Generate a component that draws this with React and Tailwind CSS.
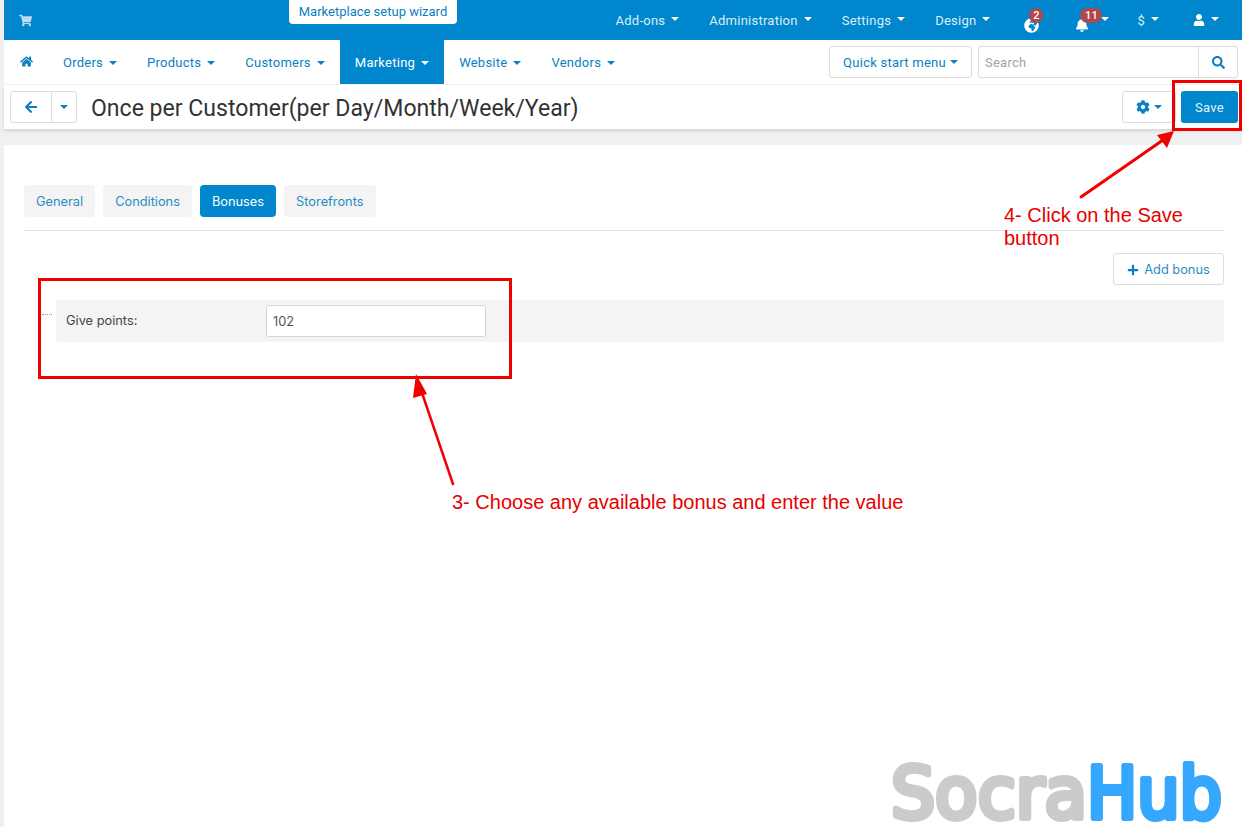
import React from 'react';
import {
  FaShoppingCart,
  FaHome,
  FaArrowLeft,
  FaCog,
  FaSearch,
  FaPlus,
  FaUser,
  FaBell,
  FaGlobeAfrica,
} from 'react-icons/fa';

const TOP_MENU = ['Add-ons', 'Administration', 'Settings', 'Design'];
const MAIN_MENU = ['Orders', 'Products', 'Customers', 'Marketing', 'Website', 'Vendors'];
const TABS = ['General', 'Conditions', 'Bonuses', 'Storefronts'];

function Caret({ className = '' }) {
  return (
    <span
      className={`inline-block w-0 h-0 border-x-[4px] border-x-transparent border-t-[4px] ${className}`}
    />
  );
}

function Badge({ children, className = '' }) {
  return (
    <span
      className={`absolute top-[8px] h-[15px] rounded-full bg-[#b0484c] text-white text-[11px] leading-[15px] text-center font-medium ${className}`}
    >
      {children}
    </span>
  );
}

function TopBar() {
  return (
    <div className="h-10 bg-[#0086cc] flex items-start text-[#d9eef9] text-[13px] tracking-[0.25px]">
      <FaShoppingCart className="mt-[14px] ml-[15px] text-[13px] text-[#b9def2]" />
      <div className="ml-[257px] w-[168px] h-6 bg-white rounded-b-[4px] text-[#0b7fc1] text-center leading-[24px] tracking-normal">
        Marketplace setup wizard
      </div>
      <div className="ml-auto flex items-center h-10 pr-[23px]">
        {TOP_MENU.map((item) => (
          <div key={item} className="flex items-center gap-[6px] px-[15px] pt-px">
            {item}
            <Caret className="border-t-white -mt-[3px]" />
          </div>
        ))}
        <div className="relative ml-[19px] w-[15px] h-10 flex items-center">
          <FaGlobeAfrica className="mt-[10px] text-[15px] text-white" />
          <Badge className="left-[5px] w-[14px]">2</Badge>
        </div>
        <div className="relative ml-[36px] h-10 flex items-center gap-[12px]">
          <FaBell className="mt-[10px] text-[14px] text-white" />
          <Badge className="left-[5px] w-[22px]">11</Badge>
          <Caret className="border-t-white -mt-[3px]" />
        </div>
        <div className="ml-[28px] flex items-center gap-[6px] pt-px">
          $
          <Caret className="border-t-white -mt-[3px]" />
        </div>
        <div className="ml-[34px] flex items-center gap-[6px]">
          <FaUser className="text-[12px] text-white" />
          <Caret className="border-t-white -mt-[3px]" />
        </div>
      </div>
    </div>
  );
}

function MainNav() {
  return (
    <div className="h-[45px] flex items-start border-b border-[#f1f1f1] text-[#0b7fc1] text-[13px] tracking-[0.25px]">
      <FaHome className="mt-[15px] ml-4 mr-[15px] text-[13px]" />
      {MAIN_MENU.map((item) => (
        <div
          key={item}
          className={`h-11 flex items-center gap-[6px] px-[15px] pt-px ${
            item === 'Marketing' ? 'bg-[#0086cc] text-white' : ''
          }`}
        >
          {item}
          <Caret className={item === 'Marketing' ? 'border-t-white' : 'border-t-[#0b7fc1]'} />
        </div>
      ))}
      <div className="ml-auto mt-[6px] flex items-center gap-[6px] pr-1">
        <button className="w-[143px] h-8 flex items-center justify-center gap-[4px] pt-px border border-[#dcdcdc] rounded-[3px] text-[#0b7fc1]">
          Quick start menu
          <Caret className="border-t-[#0b7fc1] -mt-[2px]" />
        </button>
        <div className="w-[260px] h-8 flex border border-[#dcdcdc] rounded-[3px]">
          <span className="flex-1 px-[6px] pt-px leading-[30px] text-[#a2a2a2]">Search</span>
          <span className="w-[39px] flex items-center justify-center border-l border-[#dcdcdc]">
            <FaSearch className="text-[13px]" />
          </span>
        </div>
      </div>
    </div>
  );
}

function Toolbar() {
  return (
    <div className="h-11 flex items-center pl-[6px] pr-1 shadow-[0_2px_3px_rgba(0,0,0,0.12)] relative">
      <div className="h-8 w-[67px] flex border border-[#dcdcdc] rounded-[3px] text-[#0b7fc1]">
        <span className="w-[41px] flex items-center justify-center border-r border-[#dcdcdc]">
          <FaArrowLeft className="text-[14px]" />
        </span>
        <span className="flex-1 flex items-center justify-center">
          <Caret className="border-t-[#0b7fc1]" />
        </span>
      </div>
      <h1 className="ml-[14px] mt-[4px] text-[23.07px] text-[#333333]">
        Once per Customer(per Day/Month/Week/Year)
      </h1>
      <div className="ml-auto flex items-center gap-[5px]">
        <button className="w-[54px] h-8 flex items-center justify-center gap-[4px] border border-[#dcdcdc] rounded-[3px] text-[#0b7fc1]">
          <FaCog className="text-[14px]" />
          <Caret className="border-t-[#0b7fc1] -mt-[1px]" />
        </button>
        <button className="w-[57px] h-8 pt-[2px] bg-[#0086cc] rounded-[3px] text-[#e6f4fb] text-[13px] tracking-[0.3px]">
          Save
        </button>
      </div>
    </div>
  );
}

function Content() {
  return (
    <div className="flex-1 bg-white pl-5 pr-[18px] pt-10 font-['Inter',sans-serif]">
      <div className="flex gap-2 pb-[13px] border-b border-[#e3e3e3]">
        {TABS.map((tab) => (
          <div
            key={tab}
            className={`h-8 px-3 leading-[34px] rounded-[4px] text-[12.8px] ${
              tab === 'Bonuses' ? 'bg-[#0086cc] text-white' : 'bg-[#f4f4f4] text-[#2a8cc4]'
            }`}
          >
            {tab}
          </div>
        ))}
      </div>
      <div className="flex justify-end mt-[22px]">
        <button className="w-[111px] h-8 flex items-center justify-center gap-[5px] pt-px border border-[#dcdcdc] rounded-[3px] text-[#2a8cc4] text-[12.8px]">
          <FaPlus className="text-[12px] text-[#0b7fc1]" />
          Add bonus
        </button>
      </div>
      <div className="relative ml-8 mt-[15px] h-[42px] flex items-center pl-[10px] bg-[#f4f4f4] rounded-[3px]">
        <span className="absolute -left-[14px] top-[14px] w-[10px] border-t border-dotted border-[#999999]" />
        <label className="w-[200px] text-[12.8px] text-[#444444]">Give points:</label>
        <div className="w-[220px] h-8 pl-[6px] pt-px leading-[30px] bg-white border border-[#d6d6d6] rounded-[2px] text-[12.8px] text-[#555555]">
          102
        </div>
      </div>
    </div>
  );
}

function Annotations() {
  return (
    <>
      <div className="absolute left-[38px] top-[278px] w-[474px] h-[101px] border-[3px] border-[#f00000]" />
      <div className="absolute left-[1172px] top-[80px] w-[70px] h-[51px] border-[3px] border-[#f00000]" />
      {/* annotation arrows */}
      <svg className="absolute left-0 top-0 pointer-events-none" width="1242" height="827">
        <line x1="1081" y1="197" x2="1163" y2="140" stroke="#f00000" strokeWidth="3" strokeLinecap="round" />
        <polygon points="1174,131 1167,148 1157,135" fill="#f00000" />
        <line x1="453" y1="484" x2="421" y2="390" stroke="#f00000" strokeWidth="2.5" strokeLinecap="round" />
        <polygon points="416,374 427,394 413,398" fill="#f00000" />
      </svg>
      <div className="absolute left-[1004px] top-[204px] w-[200px] text-[20px] leading-[23px] text-[#e60000] font-['Liberation_Sans',sans-serif]">
        4- Click on the Save button
      </div>
      <div className="absolute left-[452px] top-[491px] text-[20px] leading-[23px] text-[#e60000] font-['Liberation_Sans',sans-serif]">
        3- Choose any available bonus and enter the value
      </div>
      {/* watermark logo */}
      <svg className="absolute left-[880px] top-[750px]" width="362" height="77">
        <text
          x="11"
          y="68"
          fontFamily="'DejaVu Sans', sans-serif"
          fontSize="72"
          fill="#cbcbcb"
          stroke="#cbcbcb"
          strokeWidth="6"
          strokeLinejoin="round"
          strokeLinecap="round"
          textLength="196"
          lengthAdjust="spacingAndGlyphs"
        >
          Socra
        </text>
        <text
          x="207"
          y="68"
          fontFamily="'DejaVu Sans', sans-serif"
          fontSize="72"
          fill="#35a7ff"
          stroke="#35a7ff"
          strokeWidth="6"
          strokeLinejoin="round"
          strokeLinecap="round"
          textLength="135"
          lengthAdjust="spacingAndGlyphs"
        >
          Hub
        </text>
      </svg>
    </>
  );
}

export default function App() {
  return (
    <div className="relative w-[1242px] h-[827px] overflow-hidden bg-[#eef0f1] pl-1 font-['Roboto',sans-serif]">
      <div className="h-full flex flex-col">
        <div className="bg-white">
          <TopBar />
          <MainNav />
          <Toolbar />
        </div>
        <div className="h-4" />
        <Content />
      </div>
      <Annotations />
    </div>
  );
}
